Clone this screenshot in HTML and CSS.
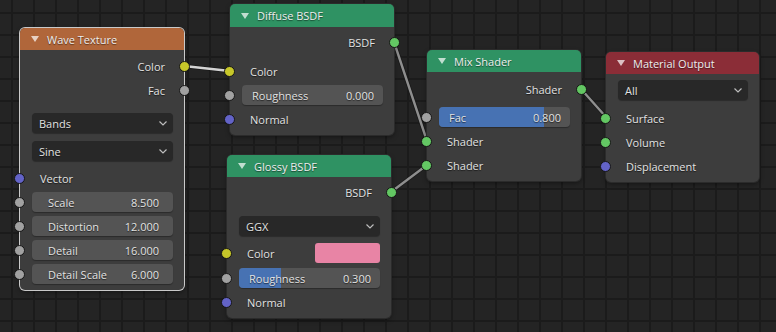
FILE: index.html
```html
<!DOCTYPE html>
<html>
  <head>
    <title>Shader Nodes</title>
    <link rel="stylesheet" href="styles.css">
  </head>
  <body>
    <div class="canvas">
      <svg class="wires" width="776" height="332">
        <g class="wire-shade">
          <line x1="184" y1="66" x2="230" y2="71"/>
          <line x1="394" y1="42" x2="427" y2="141"/>
          <line x1="391" y1="192" x2="427" y2="165"/>
          <line x1="581" y1="89" x2="606" y2="117"/>
        </g>
        <line class="wire wire-active" x1="184" y1="66" x2="230" y2="71"/>
        <line class="wire" x1="394" y1="42" x2="427" y2="141"/>
        <line class="wire" x1="391" y1="192" x2="427" y2="165"/>
        <line class="wire" x1="581" y1="89" x2="606" y2="117"/>
      </svg>

      <!-- Wave Texture -->
      <div class="node node-wave selected">
        <div class="head head-texture">
          <svg class="arrow" width="8" height="6"><polygon points="0,0 8,0 4,6"/></svg>
          <span>Wave Texture</span>
        </div>
        <div class="row out mt4"><span>Color</span><i class="sock yellow"></i></div>
        <div class="row out"><span>Fac</span><i class="sock grey"></i></div>
        <div class="row wrow mt9">
          <div class="menu"><span>Bands</span><svg width="8" height="5"><path d="M0.5 0.5l3.5 3.5 3.5-3.5"/></svg></div>
        </div>
        <div class="row wrow mt4">
          <div class="menu"><span>Sine</span><svg width="8" height="5"><path d="M0.5 0.5l3.5 3.5 3.5-3.5"/></svg></div>
        </div>
        <div class="row mt3"><i class="sock purple"></i><span>Vector</span></div>
        <div class="row wrow"><i class="sock grey"></i><div class="field wide"><span>Scale</span><span>8.500</span></div></div>
        <div class="row wrow"><i class="sock grey"></i><div class="field wide"><span>Distortion</span><span>12.000</span></div></div>
        <div class="row wrow"><i class="sock grey"></i><div class="field wide"><span>Detail</span><span>16.000</span></div></div>
        <div class="row wrow"><i class="sock grey"></i><div class="field wide"><span>Detail Scale</span><span>6.000</span></div></div>
      </div>

      <!-- Diffuse BSDF -->
      <div class="node node-diffuse">
        <div class="head head-shader tall">
          <svg class="arrow" width="8" height="6"><polygon points="0,0 8,0 4,6"/></svg>
          <span>Diffuse BSDF</span>
        </div>
        <div class="row out mt3"><span>BSDF</span><i class="sock green"></i></div>
        <div class="row mt5"><i class="sock yellow"></i><span>Color</span></div>
        <div class="row wrow"><i class="sock grey"></i><div class="field"><span>Roughness</span><span>0.000</span></div></div>
        <div class="row"><i class="sock purple"></i><span>Normal</span></div>
      </div>

      <!-- Glossy BSDF -->
      <div class="node node-glossy">
        <div class="head head-shader">
          <svg class="arrow" width="8" height="6"><polygon points="0,0 8,0 4,6"/></svg>
          <span>Glossy BSDF</span>
        </div>
        <div class="row out mt3"><span>BSDF</span><i class="sock green"></i></div>
        <div class="row wrow mt10">
          <div class="menu"><span>GGX</span><svg width="8" height="5"><path d="M0.5 0.5l3.5 3.5 3.5-3.5"/></svg></div>
        </div>
        <div class="row color-row mt3"><i class="sock yellow"></i><span>Color</span><div class="swatch"></div></div>
        <div class="row wrow mt1"><i class="sock grey"></i>
          <div class="field slider"><div class="fill" style="width:30%"></div><span>Roughness</span><span>0.300</span></div>
        </div>
        <div class="row"><i class="sock purple"></i><span>Normal</span></div>
      </div>

      <!-- Mix Shader -->
      <div class="node node-mix">
        <div class="head head-shader">
          <svg class="arrow" width="8" height="6"><polygon points="0,0 8,0 4,6"/></svg>
          <span>Mix Shader</span>
        </div>
        <div class="row out mt5"><span>Shader</span><i class="sock green"></i></div>
        <div class="row wrow mt4"><i class="sock grey"></i>
          <div class="field slider"><div class="fill" style="width:80%"></div><span>Fac</span><span>0.800</span></div>
        </div>
        <div class="row"><i class="sock green"></i><span>Shader</span></div>
        <div class="row"><i class="sock green"></i><span>Shader</span></div>
      </div>

      <!-- Material Output -->
      <div class="node node-output">
        <div class="head head-output">
          <svg class="arrow" width="8" height="6"><polygon points="0,0 8,0 4,6"/></svg>
          <span>Material Output</span>
        </div>
        <div class="row wrow mt4">
          <div class="menu"><span>All</span><svg width="8" height="5"><path d="M0.5 0.5l3.5 3.5 3.5-3.5"/></svg></div>
        </div>
        <div class="row mt4"><i class="sock green"></i><span>Surface</span></div>
        <div class="row"><i class="sock green"></i><span>Volume</span></div>
        <div class="row"><i class="sock purple"></i><span>Displacement</span></div>
      </div>
    </div>
  </body>
</html>
```

FILE: styles.css
```css
body{
  margin:0;
  background:#232323;
  font-family:"Open Sans", "DejaVu Sans", sans-serif;
  font-size:11px;
  color:#e2e2e2;
}
.canvas{
  position:relative;
  width:776px;
  height:332px;
  overflow:hidden;
  background-color:#242424;
  background-image:
    linear-gradient(to right, #1b1b1b 2px, transparent 2px),
    linear-gradient(to bottom, #1b1b1b 2px, transparent 2px);
  background-size:22px 22px;
  background-position:11px 12px;
}

/* links */
.wires{
  position:absolute;
  left:0;
  top:0;
}
.wire-shade line{
  stroke:#1a1a1a;
  stroke-width:4;
  stroke-linecap:round;
}
.wire{
  stroke:#8e8e8e;
  stroke-width:2.4;
  stroke-linecap:round;
}
.wire-active{
  stroke:#d4d4d4;
}

/* nodes */
.node{
  position:absolute;
  box-sizing:border-box;
  background:#3d3d3d;
  border-radius:5px;
  box-shadow:0 0 0 1px #2b2b2b, 0 2px 5px rgba(0,0,0,0.45);
  padding-bottom:4px;
}
.node.selected{
  box-shadow:0 0 0 1px #c9c9c9, 0 2px 5px rgba(0,0,0,0.45);
}
.node-wave{ left:20px; top:28px; width:164px; }
.node-diffuse{ left:230px; top:4px; width:164px; }
.node-glossy{ left:227px; top:155px; width:164px; }
.node-mix{ left:427px; top:50px; width:154px; }
.node-output{ left:606px; top:52px; width:153px; }

.head{
  height:22px;
  display:flex;
  align-items:center;
  padding-left:11px;
  border-radius:5px 5px 0 0;
  color:#eeeeee;
  font-size:11px;
  text-shadow:0 1px 1px rgba(0,0,0,0.5);
}
.head.tall{ height:23px; }
.head .arrow{
  margin-right:8px;
  fill:rgba(255,255,255,0.7);
}
.head-texture{ background:#b0663a; }
.head-shader{ background:#2f9263; }
.head-output{ background:#8b2d37; }

/* rows */
.row{
  position:relative;
  height:24px;
  display:flex;
  align-items:center;
  padding:0 19px 0 20px;
  text-shadow:0 1px 1px rgba(0,0,0,0.6);
}
.row.out{ justify-content:flex-end; }
.row.wrow{ padding:0 11px 0 12px; }
.mt1{ margin-top:1px; }
.mt3{ margin-top:3px; }
.mt4{ margin-top:4px; }
.mt5{ margin-top:5px; }
.mt9{ margin-top:9px; }
.mt10{ margin-top:10px; }

.sock{
  position:absolute;
  left:-6px;
  top:6.5px;
  width:11px;
  height:11px;
  box-sizing:border-box;
  border-radius:50%;
  border:1px solid #161616;
}
.out .sock{
  left:auto;
  right:-6px;
}
.yellow{ background:#c7c729; }
.grey{ background:#a1a1a1; }
.purple{ background:#6363c7; }
.green{ background:#63c763; }

/* widgets */
.menu{
  flex:1;
  height:20px;
  display:flex;
  align-items:center;
  justify-content:space-between;
  padding:0 6px 0 7px;
  background:#282828;
  border-radius:4px;
  box-shadow:0 1px 1px rgba(0,0,0,0.3);
}
.menu path{
  stroke:#bdbdbd;
  stroke-width:1.2;
  fill:none;
}
.field{
  position:relative;
  flex:1;
  height:20px;
  display:flex;
  align-items:center;
  justify-content:space-between;
  padding:0 9px 0 10px;
  background:#545454;
  border-radius:4px;
  overflow:hidden;
  box-shadow:0 1px 1px rgba(0,0,0,0.3);
}
.field.wide{ padding:0 14px 0 16px; }
.field span{ position:relative; }
.fill{
  position:absolute;
  left:0;
  top:0;
  bottom:0;
  background:#4772b3;
}
.color-row{ padding-right:11px; }
.swatch{
  margin-left:auto;
  width:65px;
  height:20px;
  border-radius:3px;
  background:#e884a5;
}
```
